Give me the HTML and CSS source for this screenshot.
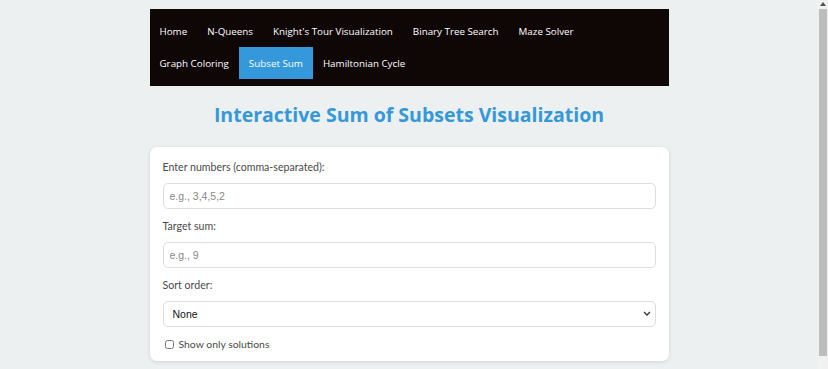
FILE: index.html
```html
<!DOCTYPE html>
<html lang="en">
<head>
    <meta charset="UTF-8">
    <meta name="viewport" content="width=device-width, initial-scale=1.0">
    <title>Sum of Subsets</title>
    <link rel="stylesheet" href="styles.css">
</head>
<body>
    <div class="page">
        <nav class="navbar">
            <a href="#">Home</a>
            <a href="#">N-Queens</a>
            <a href="#">Knight's Tour Visualization</a>
            <a href="#">Binary Tree Search</a>
            <a href="#">Maze Solver</a>
            <a href="#">Graph Coloring</a>
            <a href="#" class="active">Subset Sum</a>
            <a href="#">Hamiltonian Cycle</a>
        </nav>

        <h1 class="title">Interactive Sum of Subsets Visualization</h1>

        <div class="card">
            <div class="field">
                <label for="numbers">Enter numbers (comma-separated):</label>
                <input type="text" id="numbers" placeholder="e.g., 3,4,5,2">
            </div>
            <div class="field">
                <label for="target">Target sum:</label>
                <input type="text" id="target" placeholder="e.g., 9">
            </div>
            <div class="field select-wrap">
                <label for="sort">Sort order:</label>
                <select id="sort">
                    <option>None</option>
                    <option>Ascending</option>
                    <option>Descending</option>
                </select>
                <svg class="chevron" viewBox="0 0 8 5" width="8" height="5">
                    <path d="M1 1 L4 4 L7 1" fill="none" stroke="#333" stroke-width="1.3" />
                </svg>
            </div>
            <label class="check">
                <input type="checkbox" id="only-solutions">
                Show only solutions
            </label>
        </div>

        <div class="results" id="results"></div>
    </div>

    <!-- barra de desplazamiento dibujada -->
    <div class="scrollbar">
        <span class="scroll-arrow"></span>
        <div class="scroll-thumb"></div>
    </div>
</body>
</html>
```

FILE: styles.css
```css
* {
    margin: 0;
    padding: 0;
    box-sizing: border-box;
}

body {
    background: #ecf0f1;
    font-family: 'Lato', 'Open Sans', sans-serif;
    color: #333;
    padding-right: 10px;
}

.page {
    width: 519px;
    margin: 9px auto 0;
}

.navbar {
    display: flex;
    flex-wrap: wrap;
    background: #0f0606;
    padding: 6px 0 7px 0;
}

.navbar a {
    color: #fff;
    text-decoration: none;
    font-family: 'Open Sans', sans-serif;
    font-size: 9.8px;
    line-height: 18px;
    padding: 8px 10px 6px;
}

.navbar a.active {
    background: #3498db;
}

.title {
    color: #3498db;
    font-family: 'Open Sans', sans-serif;
    font-size: 19.5px;
    font-weight: 700;
    text-align: center;
    line-height: 28px;
    margin: 15px 0 18px;
}

.card {
    background: #fff;
    border-radius: 7px;
    padding: 12px 13px 9px;
    box-shadow: 0 1px 4px rgba(0, 0, 0, 0.12);
}

.field {
    margin-bottom: 9px;
}

.field label {
    display: block;
    font-size: 10.6px;
    line-height: 16px;
    color: #4a4a4a;
    margin-bottom: 8px;
}

.field input,
.field select {
    display: block;
    width: 100%;
    height: 26px;
    border: 1px solid #ddd;
    border-radius: 5px;
    background: #fff;
    padding: 0 6px;
    font-family: 'Liberation Sans', Arial, sans-serif;
    font-size: 10.5px;
    color: #222;
}

.field select {
    appearance: none;
    -webkit-appearance: none;
    padding-left: 9px;
    color: #111;
}

.select-wrap {
    position: relative;
}

.chevron {
    position: absolute;
    right: 5px;
    bottom: 11px;
}

.field input::placeholder {
    color: #888;
}

.check {
    display: flex;
    align-items: center;
    gap: 5px;
    font-size: 10.4px;
    line-height: 16px;
    color: #4a4a4a;
    padding-left: 2px;
}

.check input {
    width: 9px;
    height: 9px;
}

.results {
    height: 30px;
}

.scrollbar {
    position: fixed;
    top: 0;
    right: 0;
    width: 10px;
    height: 100vh;
    background: #f1f1f1;
}

.scroll-arrow {
    position: absolute;
    top: 2px;
    left: 2px;
    border-left: 3px solid transparent;
    border-right: 3px solid transparent;
    border-bottom: 4px solid #505050;
}

.scroll-thumb {
    position: absolute;
    top: 9px;
    left: 1px;
    right: 1px;
    height: 347px;
    background: #bdbdbd;
}
```
